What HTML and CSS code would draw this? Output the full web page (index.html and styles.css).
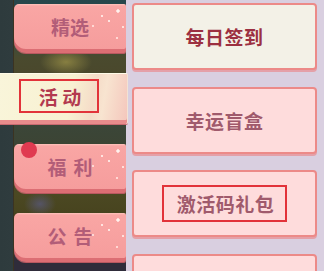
FILE: index.html
```html
<!DOCTYPE html>
<html lang="zh">
<head>
    <meta charset="UTF-8">
    <meta name="viewport" content="width=device-width, initial-scale=1.0">
    <title>活动</title>
    <link rel="stylesheet" href="styles.css">
</head>
<body>
    <div class="screen">
        <div class="side">
            <div class="tab">精选</div>
            <div class="tab active"><span class="mark">活 动</span></div>
            <div class="tab wide">
                <span class="dot"></span>
                福利
            </div>
            <div class="tab wide">公告</div>
        </div>
        <div class="panel">
            <div class="card first">每日签到</div>
            <div class="card">幸运盲盒</div>
            <div class="card"><span class="mark code">激活码礼包</span></div>
            <div class="card"></div>
        </div>
    </div>
</body>
</html>
```

FILE: styles.css
```css
body {
    margin: 0;
    width: 324px;
    height: 271px;
    overflow: hidden;
    font-family: "Noto Sans CJK SC", "Noto Sans", sans-serif;
}

.screen {
    display: flex;
    height: 271px;
    overflow: hidden;
}

/* left menu over the game art */
.side {
    width: 112px;
    padding: 4px 0 0 14px;
    display: flex;
    flex-direction: column;
    gap: 20px;
    background:
        linear-gradient(to right, #2e3b3d 0, #2f3c3e 13px, #3b3322 13px, #3b3322 14px, transparent 14px),
        radial-gradient(ellipse 26px 14px at 66px 62px, rgba(150, 140, 70, 0.8), transparent),
        radial-gradient(ellipse 16px 12px at 40px 204px, rgba(90, 90, 130, 0.7), transparent),
        linear-gradient(to bottom, #26464b 0, #2c4a48 30px, #4a4a2e 58px, #4a482c 72px, #3b4638 125px, #3c4434 145px, #4b4822 195px, #48441f 212px, #2f2c3a 262px);
}

.tab {
    position: relative;
    height: 49px;
    box-sizing: border-box;
    padding-bottom: 4px;
    display: flex;
    align-items: center;
    justify-content: center;
    border-radius: 5px 2px 2px 12px;
    background:
        radial-gradient(circle 2px at 104px 7px, #fff2ee 70%, transparent),
        radial-gradient(circle 1.5px at 88px 12px, #ffe4e0 70%, transparent),
        radial-gradient(circle 1.5px at 95px 17px, #ffe4e0 70%, transparent),
        radial-gradient(circle 1.2px at 109px 23px, #ffe0dc 70%, transparent),
        radial-gradient(circle 1.2px at 79px 22px, #ffd8d4 70%, transparent),
        radial-gradient(circle 1.2px at 103px 34px, #ffd8d4 70%, transparent),
        linear-gradient(to bottom, #ffc4bc 0, #f9a6a4 2px, #f59c9c 100%);
    box-shadow: inset 0 -4px 0 #dc6e74, 0 1px 0 #b85860;
    color: #b25d78;
    font-size: 19px;
    font-weight: bold;
}

.tab.wide {
    letter-spacing: 7px;
    padding-left: 7px;
}

.tab.active {
    z-index: 1;
    height: 51px;
    width: 128px;
    margin-left: -14px;
    padding: 5px 0 11px 19px;
    align-items: stretch;
    justify-content: flex-start;
    border-radius: 0 2px 2px 0;
    border-top: 1px solid #fffbe8;
    border-right: 1px solid #f2e2d4;
    background: linear-gradient(100deg, #f9f5da 0, #f8f1d2 55%, #f5dcc8 72%, #f8e4d0 80%, #f4c6bc 100%);
    box-shadow: inset 0 -4px 0 #e88c8c, 0 1px 0 #c86a70;
    color: #b3394f;
    font-size: 19px;
}

.mark {
    display: inline-block;
    box-sizing: border-box;
    border: 2px solid #e2333a;
}

.tab.active .mark {
    width: 80px;
    line-height: 31px;
    text-align: center;
    letter-spacing: 0;
    padding-left: 2px;
}

.dot {
    position: absolute;
    left: 7px;
    top: -2px;
    width: 16px;
    height: 16px;
    border-radius: 50%;
    background: #e03a50;
}

/* right list */
.panel {
    flex: 1;
    background: #d9cfe0;
    padding: 3px 7px 0 6px;
    display: flex;
    flex-direction: column;
    gap: 16.5px;
    overflow: hidden;
}

.card {
    flex: none;
    height: 67px;
    box-sizing: border-box;
    border: 2px solid #ec8a88;
    border-radius: 4px;
    box-shadow: 0 2px 0 #e4a0a8;
    background: #fedcdc;
    display: flex;
    align-items: center;
    justify-content: center;
    color: #a05a6c;
    font-size: 19px;
    font-weight: bold;
    letter-spacing: 0.5px;
}

.card.first {
    background: #f3f1e7;
    color: #9c3041;
}

.mark.code {
    height: 37px;
    line-height: 33px;
    padding: 0 11px 0 13px;
}
```
